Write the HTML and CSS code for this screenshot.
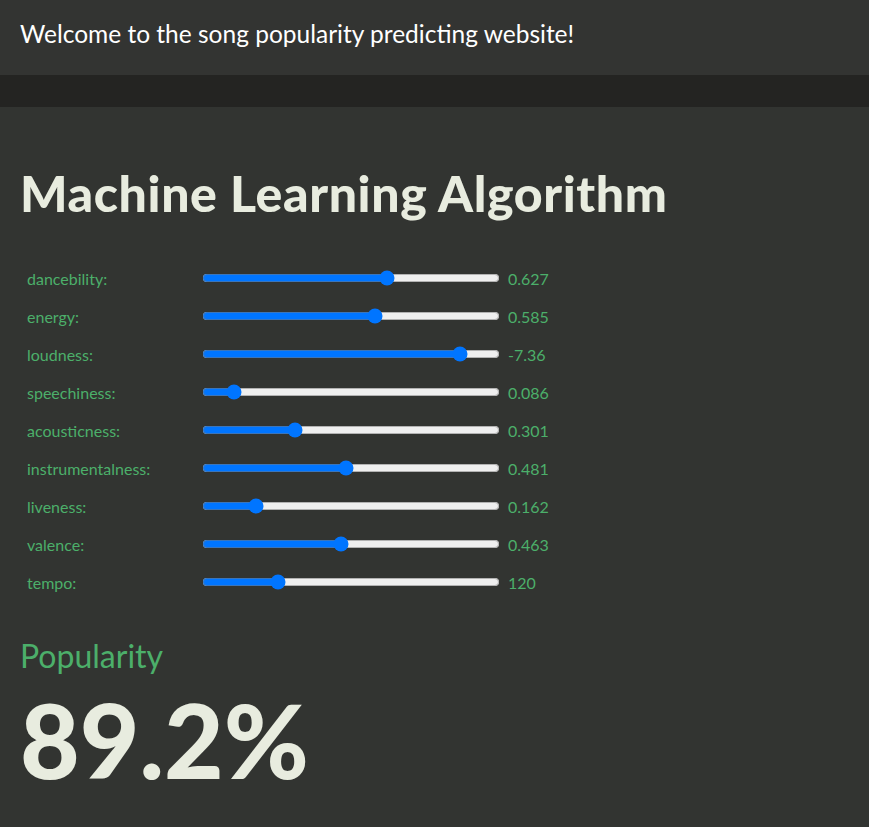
FILE: index.html
```html
<!DOCTYPE html>
<html lang="en">
<head>
<meta charset="utf-8">
<title>Song Popularity</title>
<link rel="stylesheet" href="styles.css">
</head>
<body>
<header class="top">Welcome to the song popularity predicting website!</header>
<div class="band"></div>
<main class="main">
  <h1 class="title">Machine Learning Algorithm</h1>
  <div class="sliders">
    <div class="row"><span class="label">dancebility:</span><input class="range" type="range" min="0" max="1" step="0.001" value="0.627"><span class="val">0.627</span></div>
    <div class="row"><span class="label">energy:</span><input class="range" type="range" min="0" max="1" step="0.001" value="0.585"><span class="val">0.585</span></div>
    <div class="row"><span class="label">loudness:</span><input class="range" type="range" min="-65" max="0" step="0.01" value="-7.36"><span class="val">-7.36</span></div>
    <div class="row"><span class="label">speechiness:</span><input class="range" type="range" min="0" max="1" step="0.001" value="0.086"><span class="val">0.086</span></div>
    <div class="row"><span class="label">acousticness:</span><input class="range" type="range" min="0" max="1" step="0.001" value="0.301"><span class="val">0.301</span></div>
    <div class="row"><span class="label">instrumentalness:</span><input class="range" type="range" min="0" max="1" step="0.001" value="0.481"><span class="val">0.481</span></div>
    <div class="row"><span class="label">liveness:</span><input class="range" type="range" min="0" max="1" step="0.001" value="0.162"><span class="val">0.162</span></div>
    <div class="row"><span class="label">valence:</span><input class="range" type="range" min="0" max="1" step="0.001" value="0.463"><span class="val">0.463</span></div>
    <div class="row"><span class="label">tempo:</span><input class="range" type="range" min="0" max="500" step="1" value="120"><span class="val">120</span></div>
  </div>
  <h2 class="pop-label">Popularity</h2>
  <div class="pop-value">89.2%</div>
</main>
</body>
</html>
```
FILE: styles.css
```css
html, body {
  margin: 0;
  padding: 0;
  background: #323431;
  font-family: "Lato", "Open Sans", sans-serif;
  color: #e8ecdf;
}
.top {
  height: 75px;
  box-sizing: border-box;
  padding: 19px 20px 0;
  font-size: 24.5px;
  line-height: 30px;
  color: #ffffff;
  background: #333432;
}
.band {
  height: 32px;
  background: #242422;
}
.main {
  padding: 0 20px 20px;
}
.title {
  margin: 56px 0 36px;
  font-size: 50px;
  line-height: 60px;
  font-weight: 900;
  letter-spacing: 0.6px;
  color: #e8ecdf;
}
.sliders {
  display: flex;
  flex-direction: column;
}
.row {
  display: flex;
  align-items: center;
  height: 38px;
  color: #4caf6a;
  font-size: 16px;
}
.label {
  width: 173px;
  padding-left: 7px;
}
.range {
  width: 298px;
  margin: 2px;
}
.val {
  margin-left: 6px;
}
.pop-label {
  margin: 35px 0 0;
  font-size: 32px;
  line-height: 40px;
  font-weight: 400;
  color: #4caf6a;
}
.pop-value {
  margin-top: 8px;
  font-size: 103px;
  line-height: 110px;
  font-weight: 900;
  color: #e8ecdf;
}
```
